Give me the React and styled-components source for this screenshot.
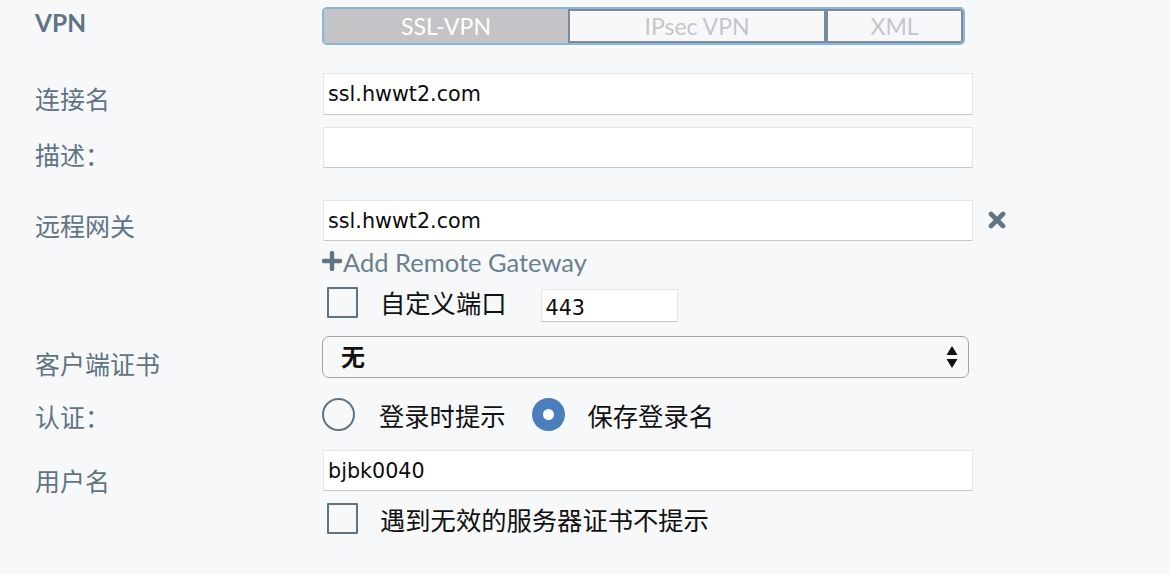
import styled, { createGlobalStyle } from 'styled-components';

const GlobalStyle = createGlobalStyle`
  html, body {
    margin: 0;
    padding: 0;
    background: #f7f8fa;
  }
  * { box-sizing: border-box; }
`;

const CJK = `"Noto Sans CJK SC", sans-serif`;
const LABEL_FONT = `Lato, "Noto Sans CJK SC", sans-serif`;
const INPUT_FONT = `"DejaVu Sans", "Noto Sans CJK SC", sans-serif`;

const Page = styled.div`
  width: 1170px;
  height: 574px;
  background: #f7f8fa;
  overflow: hidden;
  padding-top: 7px;
`;

const Row = styled.div`
  display: flex;
  align-items: flex-start;
  margin-top: ${p => p.$top || 0}px;
`;

const Label = styled.div`
  width: 322px;
  flex: none;
  padding-left: 35px;
  padding-top: ${p => p.$pad || 0}px;
  font-family: ${LABEL_FONT};
  font-size: ${p => (p.$bold ? 24.5 : 25)}px;
  font-weight: ${p => (p.$bold ? 700 : 400)};
  line-height: 28px;
  color: #5f7484;
`;

const Field = styled.div`
  display: flex;
  flex-direction: column;
  align-items: flex-start;
`;

const Segmented = styled.div`
  display: flex;
  width: 643px;
  height: 38px;
  border: 2px solid #8ab5dc;
  border-radius: 5px;
  overflow: hidden;
`;

const Segment = styled.div`
  width: ${p => p.$w}px;
  display: flex;
  align-items: center;
  justify-content: center;
  font-family: Lato, sans-serif;
  font-size: 23px;
  background: ${p => (p.$active ? '#c4c4c6' : '#f8f8fb')};
  color: ${p => (p.$active ? '#ffffff' : '#c6c6ca')};
  border: ${p => (p.$active ? 'none' : '2px solid #7b8b9d')};
`;

const TextInput = styled.div`
  width: ${p => p.$w || 650}px;
  height: ${p => p.$h || 42}px;
  margin-left: 1px;
  margin-top: ${p => p.$top || 0}px;
  background: #ffffff;
  border: 1px solid #e6e6e6;
  border-bottom-color: #c6c6c6;
  display: flex;
  align-items: center;
  padding-left: 4px;
  padding-top: ${p => p.$padTop || 0}px;
  font-family: ${INPUT_FONT};
  font-size: 20.7px;
  color: #0c0c0c;
`;

const InputLine = styled.div`
  display: flex;
  align-items: center;
`;

const RemoveIcon = styled.svg`
  width: 18px;
  height: 18px;
  margin-left: 15px;
  margin-top: -1px;
`;

const AddLink = styled.div`
  margin-top: 8px;
  height: 26px;
  display: flex;
  align-items: center;
  font-family: Lato, sans-serif;
  font-size: 25.5px;
  color: #6a808f;
  svg { width: 20px; height: 20px; margin-right: 1px; margin-top: -3px; }
`;

const OptionLine = styled.div`
  display: flex;
  align-items: ${p => p.$align || 'center'};
  margin-top: ${p => p.$top || 0}px;
  margin-left: ${p => p.$left || 0}px;
`;

const Checkbox = styled.div`
  width: 31px;
  height: 31px;
  border: 2px solid #5f7484;
  border-radius: 1px;
  flex: none;
`;

const OptionText = styled.span`
  font-family: ${CJK};
  font-size: 25.3px;
  line-height: 30px;
  color: #111;
  margin-left: ${p => p.$left || 22}px;
  margin-right: ${p => p.$right || 0}px;
`;

const Select = styled.div`
  width: 647px;
  height: 42px;
  border: 1.5px solid #a2a2a2;
  border-radius: 7px;
  display: flex;
  align-items: center;
  justify-content: space-between;
  padding: 0 10px 3px 18px;
  font-family: ${CJK};
  font-size: 24px;
  font-weight: 700;
  color: #111;
  svg { width: 12px; height: 26px; margin-top: 3px; }
`;

const Radio = styled.div`
  width: 33px;
  height: 33px;
  border-radius: 50%;
  flex: none;
  border: ${p => (p.$checked ? 'none' : '2px solid #5f7484')};
  background: ${p => (p.$checked ? '#4a7ebf' : 'transparent')};
  display: flex;
  align-items: center;
  justify-content: center;
  &::after {
    content: '';
    display: ${p => (p.$checked ? 'block' : 'none')};
    width: 11px;
    height: 11px;
    border-radius: 50%;
    background: #fff;
  }
`;

export default function App() {
  return (
    <>
      <GlobalStyle />
      <Page>
        <Row>
          <Label $bold $pad={2}>VPN</Label>
          <Segmented>
            <Segment $w={244} $active>SSL-VPN</Segment>
            <Segment $w={258}>IPsec VPN</Segment>
            <Segment $w={137}>XML</Segment>
          </Segmented>
        </Row>

        <Row $top={28}>
          <Label $pad={12}>连接名</Label>
          <TextInput>ssl.hwwt2.com</TextInput>
        </Row>

        <Row $top={12}>
          <Label $pad={14}>描述：</Label>
          <TextInput $h={41} />
        </Row>

        <Row $top={31}>
          <Label $pad={12}>远程网关</Label>
          <Field>
            <InputLine>
              <TextInput $h={41}>ssl.hwwt2.com</TextInput>
              <RemoveIcon viewBox="0 0 18 18">
                <path d="M3 3 L15 15 M15 3 L3 15" stroke="#5f7484" strokeWidth="4.6" strokeLinecap="round" />
              </RemoveIcon>
            </InputLine>
            <AddLink>
              <svg viewBox="0 0 20 20">
                <path d="M10 2 V18 M2 10 H18" stroke="#5f7484" strokeWidth="4.4" strokeLinecap="round" />
              </svg>
              Add Remote Gateway
            </AddLink>
            <OptionLine $top={12} $left={5} $align="flex-start">
              <Checkbox />
              <OptionText $right={33}>自定义端口</OptionText>
              <TextInput $w={137} $h={33} $top={2} $padTop={4}>443</TextInput>
            </OptionLine>
          </Field>
        </Row>

        <Row $top={14}>
          <Label $pad={14}>客户端证书</Label>
          <Select>
            <span>无</span>
            <svg viewBox="0 0 12 26">
              <path d="M6 2 L11.5 11 H0.5 Z M0.5 15 H11.5 L6 24 Z" fill="#111" />
            </svg>
          </Select>
        </Row>

        <Row $top={20}>
          <Label $pad={5}>认证：</Label>
          <OptionLine>
            <Radio />
            <OptionText $left={24} $right={26}>登录时提示</OptionText>
            <Radio $checked />
            <OptionText $left={23}>保存登录名</OptionText>
          </OptionLine>
        </Row>

        <Row $top={19}>
          <Label $pad={17}>用户名</Label>
          <Field>
            <TextInput $h={41}>bjbk0040</TextInput>
            <OptionLine $top={12} $left={5}>
              <Checkbox />
              <OptionText>遇到无效的服务器证书不提示</OptionText>
            </OptionLine>
          </Field>
        </Row>
      </Page>
    </>
  );
}
